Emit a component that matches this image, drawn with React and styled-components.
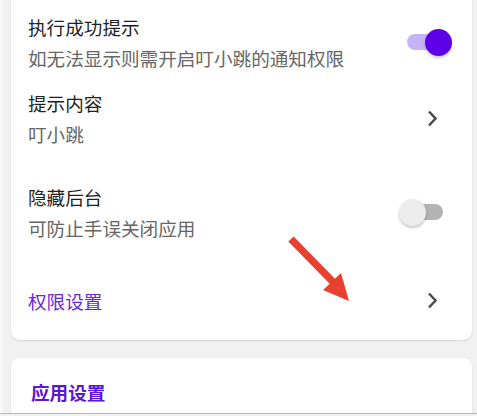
import React from "react";
import styled, { createGlobalStyle } from "styled-components";

const Global = createGlobalStyle`
  html, body { margin: 0; padding: 0; background: #f1f1f1; }
  body { font-family: "Noto Sans CJK SC", "Noto Sans", sans-serif; }
`;

const Screen = styled.div`
  position: relative;
  height: 413px;
  overflow: hidden;
  border-bottom: 1px solid #b9b9b9;
  background: #f1f1f1;
  padding: 0 5px 0 11px;
  display: flex;
  flex-direction: column;
  gap: 18px;
  box-shadow: inset 3px 0 0 #f7f7f7;
`;

const Card = styled.div`
  background: #fff;
  border-radius: ${(p) => (p.$top ? "0 0 9px 9px" : "9px")};
  box-shadow: 0 1px 2px rgba(0, 0, 0, 0.12);
  padding: ${(p) => p.$pad};
  display: flex;
  flex-direction: column;
  flex-shrink: 0;
`;

const Row = styled.div`
  height: ${(p) => p.$h}px;
  display: flex;
  align-items: center;
  justify-content: space-between;
  padding: 0 20px 0 17px;
`;

const Texts = styled.div`
  display: flex;
  flex-direction: column;
`;

const Title = styled.div`
  font-size: 18.6px;
  line-height: 31px;
  color: ${(p) => (p.$accent ? "#6a28d2" : "#1f1f1f")};
`;

const Sub = styled.div`
  font-size: 18.6px;
  line-height: 31px;
  color: #666666;
`;

const SectionTitle = styled.div`
  font-size: 18.6px;
  line-height: 31px;
  font-weight: 700;
  color: #5a16d4;
  padding: 18px 20px 0 20px;
`;

const SwitchBox = styled.div`
  position: relative;
  width: 53px;
  height: 28px;
  flex-shrink: 0;
`;

const Track = styled.div`
  position: absolute;
  left: 8px;
  right: 9px;
  top: 6px;
  height: 16px;
  border-radius: 8px;
  background: ${(p) => (p.$on ? "#c7b2f8" : "#b3b3b3")};
`;

const Thumb = styled.div`
  position: absolute;
  top: 0.5px;
  left: ${(p) => (p.$on ? "26px" : "0")};
  width: 27px;
  height: 27px;
  border-radius: 50%;
  background: ${(p) => (p.$on ? "#5d00e8" : "#ececec")};
  box-shadow: 0 2px 3px rgba(0, 0, 0, 0.22);
`;

const ChevronBox = styled.div`
  width: 20px;
  display: flex;
  justify-content: center;
  margin-right: 10px;
`;

const Arrow = styled.svg`
  position: absolute;
  left: 279px;
  top: 227px;
  width: 80px;
  height: 84px;
  pointer-events: none;
`;

function Switch({ on }) {
  return (
    <SwitchBox>
      <Track $on={on} />
      <Thumb $on={on} />
    </SwitchBox>
  );
}

function Chevron() {
  return (
    <ChevronBox>
      <svg width="11" height="17" viewBox="0 0 11 17">
        <path d="M2 1.5 L8.5 8.5 L2 15.5" fill="none" stroke="#4a4a4a" strokeWidth="2.5" />
      </svg>
    </ChevronBox>
  );
}

export default function App() {
  return (
    <>
      <Global />
      <Screen>
        <Card $top $pad="0 0 12px 0">
          <Row $h={84}>
            <Texts>
              <Title>执行成功提示</Title>
              <Sub>如无法显示则需开启叮小跳的通知权限</Sub>
            </Texts>
            <Switch on />
          </Row>
          <Row $h={68}>
            <Texts>
              <Title>提示内容</Title>
              <Sub>叮小跳</Sub>
            </Texts>
            <Chevron />
          </Row>
          <Row $h={120}>
            <Texts>
              <Title>隐藏后台</Title>
              <Sub>可防止手误关闭应用</Sub>
            </Texts>
            <Switch on={false} />
          </Row>
          <Row $h={56}>
            <Title $accent>权限设置</Title>
            <Chevron />
          </Row>
        </Card>
        <Card $pad="0 0 40px 0">
          <SectionTitle>应用设置</SectionTitle>
        </Card>
        <Arrow viewBox="0 0 80 84">
          <line x1="12" y1="12" x2="56" y2="57" stroke="#e8412f" strokeWidth="7.5" />
          <polygon points="70,74 44,63 62,46" fill="#e8412f" />
        </Arrow>
      </Screen>
    </>
  );
}
